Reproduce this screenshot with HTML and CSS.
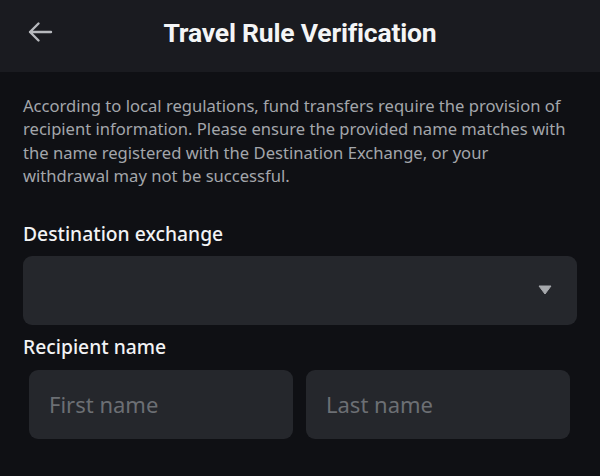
FILE: index.html
```html
<!DOCTYPE html>
<html>
<head>
<meta charset="utf-8">
<link rel="stylesheet" href="styles.css">
</head>
<body>
<div class="page">
  <header class="header">
    <span class="back">
      <svg width="26" height="22" viewBox="0 0 26 22"><path d="M24 11H3M11.5 2.5L3 11l8.5 8.5" fill="none" stroke="#b7b9bd" stroke-width="2.4" stroke-linecap="round" stroke-linejoin="round"/></svg>
    </span>
    <h1 class="title">Travel Rule Verification</h1>
  </header>
  <main class="content">
    <p class="notice">According to local regulations, fund transfers require the provision of recipient information. Please ensure the provided name matches with the name registered with the Destination Exchange, or your withdrawal may not be successful.</p>
    <div class="label label-dest">Destination exchange</div>
    <div class="select">
      <svg class="caret" width="14" height="10" viewBox="0 0 14 10"><path d="M1 1h12L7 9z" fill="#a7a9ad" stroke="#a7a9ad" stroke-width="1" stroke-linejoin="round"/></svg>
    </div>
    <div class="label label-name">Recipient name</div>
    <div class="names">
      <div class="input">First name</div>
      <div class="input">Last name</div>
    </div>
  </main>
</div>
</body>
</html>
```
FILE: styles.css
```css
html, body {
  margin: 0;
  padding: 0;
  background: #0f1014;
}
body {
  width: 600px;
  height: 476px;
  overflow: hidden;
  font-family: "Noto Sans", Roboto, sans-serif;
}
.header {
  height: 72px;
  background: #1a1b20;
  display: flex;
  align-items: center;
  justify-content: center;
  position: relative;
}
.back {
  position: absolute;
  left: 27px;
  top: 21px;
  display: flex;
}
.title {
  margin: 0 0 8px 0;
  font-family: Roboto, sans-serif;
  color: #f4f5f6;
  font-size: 26.5px;
  font-weight: 700;
  letter-spacing: -0.2px;
}
.content {
  padding: 22px 23px 0 23px;
}
.notice {
  margin: 0;
  max-width: 550px;
  color: #a3a6ab;
  font-size: 16.6px;
  line-height: 23.4px;
}
.label {
  color: #f2f3f5;
  font-size: 19.3px;
  font-weight: 500;
}
.label-dest {
  margin-top: 32px;
  height: 36px;
}
.select {
  height: 69px;
  background: #25272c;
  border-radius: 9px;
  display: flex;
  align-items: center;
  justify-content: flex-end;
  padding-right: 25px;
}
.label-name {
  margin-top: 8px;
  height: 37px;
}
.names {
  display: flex;
  gap: 13px;
  padding: 0 7px 0 6px;
}
.input {
  flex: 1;
  height: 69px;
  background: #25272c;
  border-radius: 9px;
  display: flex;
  align-items: center;
  padding-left: 20px;
  color: #6c6f74;
  font-size: 22px;
}
```
